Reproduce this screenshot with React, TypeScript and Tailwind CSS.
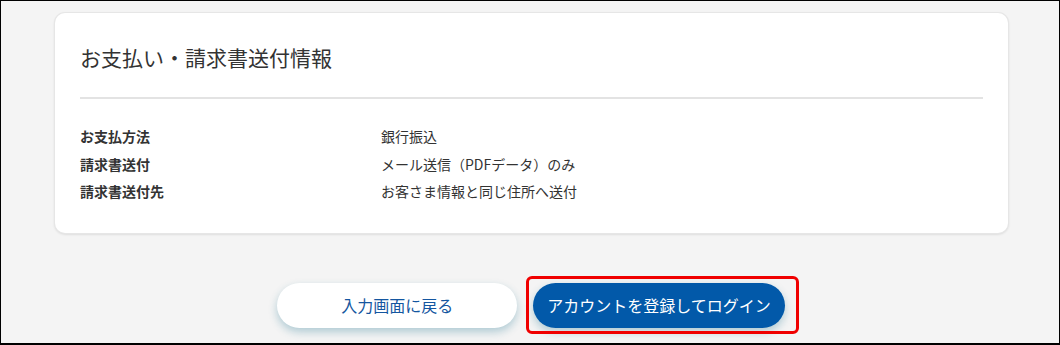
const rows = [
  { label: 'お支払方法', value: '銀行振込' },
  { label: '請求書送付', value: 'メール送信（PDFデータ）のみ' },
  { label: '請求書送付先', value: 'お客さま情報と同じ住所へ送付' },
];

export default function App() {
  return (
    <div
      className="w-[1060px] h-[345px] overflow-hidden bg-[#f4f4f4] border-l border-t border-r border-b-2 border-black text-[#333]"
      style={{ fontFamily: '"Noto Sans CJK JP", "Noto Sans", sans-serif' }}
    >
      {/* Payment / invoice card */}
      <div className="ml-[54px] mt-[12px] w-[953px] bg-white rounded-[10px] shadow-[0_0_0_1px_#e6e6e6,0_1px_3px_rgba(0,0,0,0.18)] px-[25px] pt-[29px] pb-[27px]">
        <h2 className="text-[21px] leading-[30px] font-normal tracking-[0px]">お支払い・請求書送付情報</h2>
        <div className="mt-[25px] h-[2px] bg-[#e3e3e3]" />
        <div className="pt-[24px]">
          {rows.map((r) => (
            <div key={r.label} className="grid grid-cols-[301px_1fr] text-[14px] leading-[27.5px]">
              <span className="font-bold">{r.label}</span>
              <span>{r.value}</span>
            </div>
          ))}
        </div>
      </div>

      {/* Actions */}
      <div className="mt-[50px] flex justify-center gap-4 pl-[2px]">
        <button className="h-[45px] min-w-[240px] rounded-full bg-white text-[#1456a0] text-[16px] px-[14px] shadow-[0_4px_8px_rgba(20,110,140,0.3)]">
          入力画面に戻る
        </button>
        <div className="relative">
          <button className="h-[45px] min-w-[240px] rounded-full bg-[#0259a9] text-white text-[16px] px-[14px] shadow-[0_4px_8px_rgba(20,110,140,0.3)]">
            アカウントを登録してログイン
          </button>
          <span className="absolute left-[-7px] top-[-7px] right-[-14px] bottom-[-6px] border-[3px] border-[#f00000] rounded-[6px] pointer-events-none" />
        </div>
      </div>
    </div>
  );
}
